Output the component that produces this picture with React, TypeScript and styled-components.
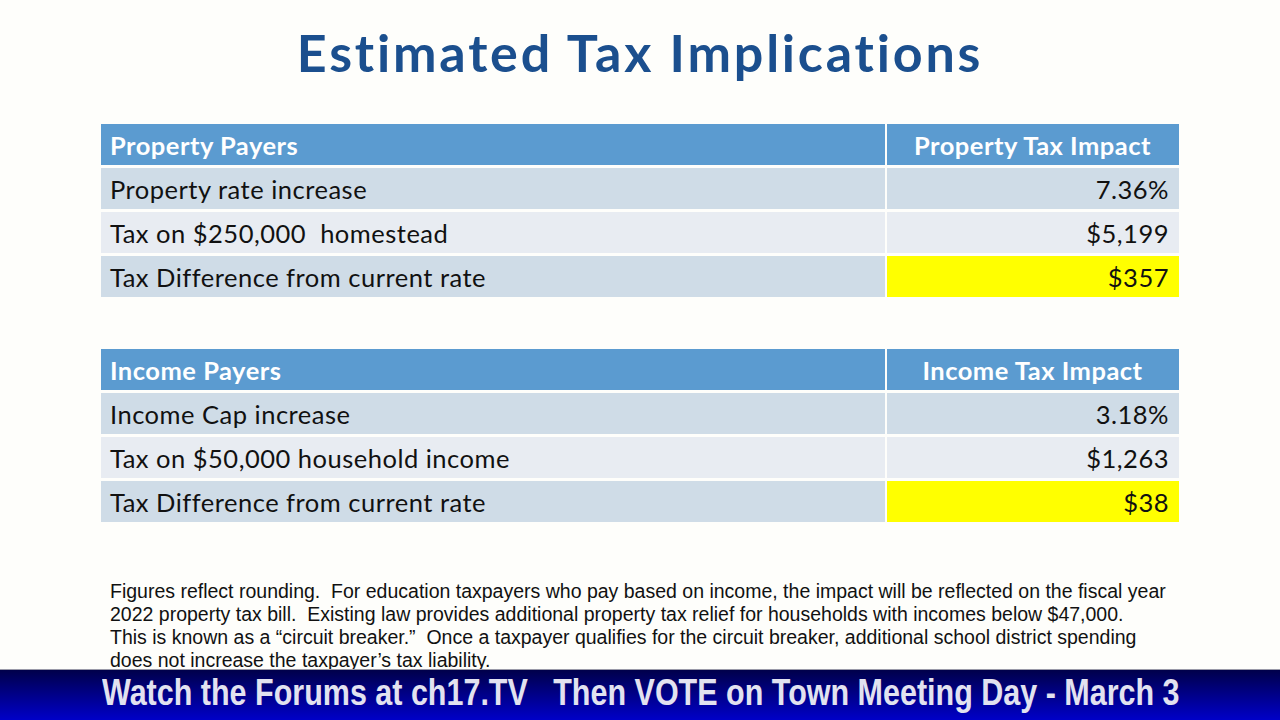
import React from "react";
import styled, { createGlobalStyle } from "styled-components";

const Global = createGlobalStyle`
  html, body { margin: 0; padding: 0; background: #fefefb; }
  body { width: 1280px; height: 720px; overflow: hidden; }
`;

const Page = styled.div`
  width: 1280px;
  height: 720px;
  display: flex;
  flex-direction: column;
  background: #fefefb;
`;

const Slide = styled.div`
  height: 669px;
  overflow: hidden;
  display: flex;
  flex-direction: column;
  padding: 0 101px;
`;

const Title = styled.h1`
  margin: 22px 0 0;
  height: 60px;
  text-align: center;
  font-family: Lato, "Open Sans", sans-serif;
  font-weight: 700;
  font-size: 52px;
  letter-spacing: 2.8px;
  line-height: 60px;
  color: #1b4f8e;
`;

const Table = styled.div<{ $top: number }>`
  margin-top: ${(p) => p.$top}px;
  display: grid;
  grid-template-columns: 784px 292px;
  column-gap: 2px;
  row-gap: 3px;
  font-family: Lato, "Open Sans", sans-serif;
  font-size: 25.5px;
  letter-spacing: 0.5px;
  color: #111;
`;

type Tone = "head" | "odd" | "even" | "hot";
const bg: Record<Tone, string> = {
  head: "#5b9bd0",
  odd: "#cfdce7",
  even: "#e8ecf2",
  hot: "#ffff00",
};

const Cell = styled.div<{ $tone: Tone; $align: "left" | "right" | "center" }>`
  height: 41px;
  display: flex;
  align-items: center;
  justify-content: ${(p) =>
    p.$align === "left" ? "flex-start" : p.$align === "right" ? "flex-end" : "center"};
  padding: 0 10px 0 9px;
  background: ${(p) => bg[p.$tone]};
  color: ${(p) => (p.$tone === "head" ? "#ffffff" : "#111111")};
  font-weight: ${(p) => (p.$tone === "head" ? 700 : 400)};
  white-space: pre;
`;

const Note = styled.p`
  margin: 58px 0 0 9px;
  font-family: "Liberation Sans", Arial, sans-serif;
  font-size: 19.5px;
  line-height: 23px;
  color: #111;
  white-space: nowrap;
`;

const Banner = styled.div`
  height: 51px;
  border-top: 1px solid #9a9aa8;
  background: linear-gradient(180deg, #00004a 0%, #00008a 50%, #0000c8 100%);
  display: flex;
  align-items: center;
  padding-left: 102px;
  box-sizing: border-box;
  overflow: hidden;
`;

const BannerText = styled.span`
  font-family: "Liberation Sans", Arial, sans-serif;
  font-weight: 700;
  font-size: 36px;
  color: #e2e2f0;
  white-space: pre;
  display: inline-block;
  transform: scaleX(0.847);
  transform-origin: left center;
  margin-top: -4px;
`;

type Row = { label: string; value: string; hot?: boolean };

const TaxTable: React.FC<{ head: string; impact: string; rows: Row[]; top: number }> = ({
  head,
  impact,
  rows,
  top,
}) => (
  <Table $top={top}>
    <Cell $tone="head" $align="left">{head}</Cell>
    <Cell $tone="head" $align="center">{impact}</Cell>
    {rows.map((r, i) => {
      const tone: Tone = i % 2 === 0 ? "odd" : "even";
      return (
        <React.Fragment key={r.label}>
          <Cell $tone={tone} $align="left">{r.label}</Cell>
          <Cell $tone={r.hot ? "hot" : tone} $align="right">{r.value}</Cell>
        </React.Fragment>
      );
    })}
  </Table>
);

export default function App() {
  return (
    <Page>
      <Global />
      <Slide>
        <Title>Estimated Tax Implications</Title>
        <TaxTable
          top={42}
          head="Property Payers"
          impact="Property Tax Impact"
          rows={[
            { label: "Property rate increase", value: "7.36%" },
            { label: "Tax on $250,000  homestead", value: "$5,199" },
            { label: "Tax Difference from current rate", value: "$357", hot: true },
          ]}
        />
        <TaxTable
          top={52}
          head="Income Payers"
          impact="Income Tax Impact"
          rows={[
            { label: "Income Cap increase", value: "3.18%" },
            { label: "Tax on $50,000 household income", value: "$1,263" },
            { label: "Tax Difference from current rate", value: "$38", hot: true },
          ]}
        />
        <Note>
          Figures reflect rounding.&nbsp; For education taxpayers who pay based on income, the impact will be reflected on the fiscal year
          <br />
          2022 property tax bill.&nbsp; Existing law provides additional property tax relief for households with incomes below $47,000.
          <br />
          This is known as a “circuit breaker.”&nbsp; Once a taxpayer qualifies for the circuit breaker, additional school district spending
          <br />
          does not increase the taxpayer’s tax liability.
        </Note>
      </Slide>
      <Banner>
        <BannerText>Watch the Forums at ch17.TV   Then VOTE on Town Meeting Day - March 3</BannerText>
      </Banner>
    </Page>
  );
}
